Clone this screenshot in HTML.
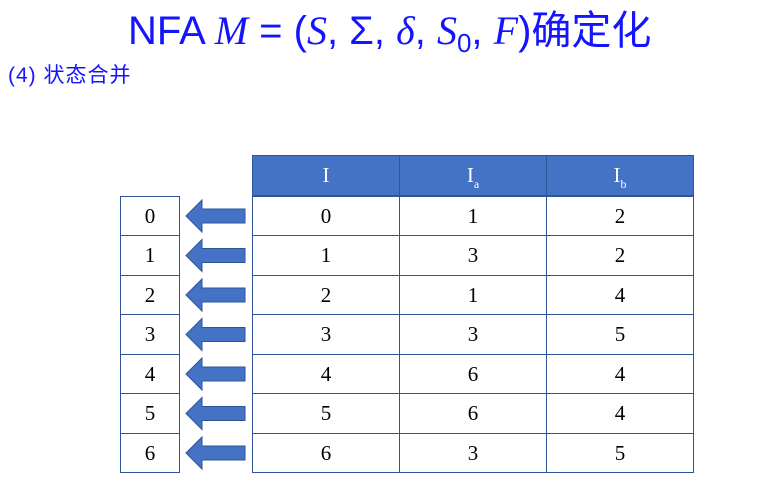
<!DOCTYPE html>
<html><head><meta charset="utf-8"><style>
body{margin:0;width:759px;height:485px;background:#fff;position:relative;overflow:hidden;font-family:"Liberation Serif",serif}
.t{position:absolute;left:128px;top:-2px;font-size:40px;color:#1414ff;white-space:nowrap;font-family:"Liberation Sans","Noto Sans CJK SC",sans-serif}
.t i{font-family:"Liberation Serif",serif;font-size:40px}
.s{position:absolute;left:8px;top:59px;font-size:21px;color:#1414ff;font-family:"Liberation Sans","Noto Sans CJK SC",sans-serif;letter-spacing:1px}
.c{position:absolute;box-sizing:border-box;border:1px solid #2f5597;text-align:center;font-size:21px;color:#000;display:flex;align-items:center;justify-content:center}
.h{background:#4472c4;color:#fff;border-color:#2f5597}
.sb{font-size:12px;position:relative;top:6px}
</style></head><body>
<div class="t">NFA <i>M</i> = (<i>S</i>, Σ, <i>δ</i>, <i>S</i><sub style="font-size:26px;vertical-align:-8px">0</sub>, <i>F</i>)确定化</div>
<div class="s">(4) 状态合并</div>
<div class="c h" style="left:252px;top:155px;width:148px;height:41px">I</div>
<div class="c h" style="left:399px;top:155px;width:148px;height:41px"><span>I<span class="sb">a</span></span></div>
<div class="c h" style="left:546px;top:155px;width:148px;height:41px"><span>I<span class="sb">b</span></span></div>
<div id="g"></div>
<svg width="759" height="485" style="position:absolute;left:0;top:0" id="sv"></svg>
<script>
var d=[[0,1,2],[1,3,2],[2,1,4],[3,3,5],[4,6,4],[5,6,4],[6,3,5]],h='',a='';
var tops=[196,235,275,314,354,393,433,472];
for(var r=0;r<7;r++){var t=tops[r],hh=tops[r+1]-t+1;
h+='<div class="c" style="left:120px;top:'+t+'px;width:60px;height:'+hh+'px">'+r+'</div>';
for(var k=0;k<3;k++)h+='<div class="c" style="left:'+(252+147*k)+'px;top:'+t+'px;width:148px;height:'+hh+'px">'+d[r][k]+'</div>';
var y=t+hh/2;
a+='<path d="M186 '+y+' L202 '+(y-16)+' L202 '+(y-7)+' L245 '+(y-7)+' L245 '+(y+7)+' L202 '+(y+7)+' L202 '+(y+16)+' Z" fill="#4472c4" stroke="#2f5597" stroke-width="1"/>';}
document.getElementById('g').innerHTML=h;document.getElementById('sv').innerHTML=a;
</script>
</body></html>
